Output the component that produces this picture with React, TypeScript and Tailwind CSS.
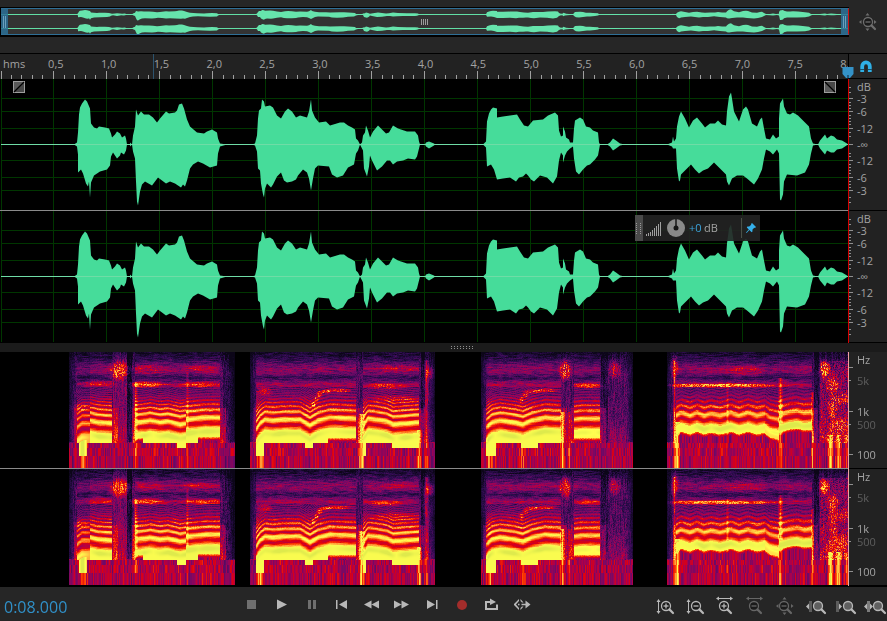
import React, { useEffect, useRef } from "react";

type Pair = [number, number];

const SPAN = 848;
const OCTAVE = 13.2;

// envelope points: x, distance from the centre line
const TOP =
  "0,0 74,0 77,2 78,12 79,30 80,37 82,41 85,45 87,43 90,36 91,21 94,17 97,16 99,18 105,17 109,16 111,11 112,7 115,10 117,13 120,11 122,7 125,9 126,6 127,0 130,0 130,2 132,0 133,9 135,18 136,35 138,29 141,33 144,30 149,30 153,27 157,22 160,26 166,33 169,31 175,32 177,34 179,40 182,41 184,36 187,25 190,18 197,12 204,11 207,13 212,15 217,12 218,6 220,1 227,0 252,0 255,1 257,9 258,26 259,34 261,36 262,45 264,43 265,38 270,39 273,37 277,29 281,26 285,33 288,36 292,33 296,27 300,29 307,27 309,33 311,45 312,34 315,27 319,22 326,23 330,19 340,22 344,22 348,19 352,17 355,15 356,6 358,4 360,0 362,2 363,9 365,12 366,19 368,14 370,7 373,13 378,19 382,15 386,11 389,12 393,19 398,16 407,13 415,13 418,9 419,3 420,0 425,0 426,2 429,3 434,1 435,0 483,0 486,3 487,23 489,31 491,35 493,37 497,36 497,27 503,28 510,29 517,30 520,25 524,19 528,18 533,24 543,25 548,29 555,32 558,29 559,14 561,8 563,9 563,18 565,13 566,7 569,5 570,2 573,2 574,16 575,24 580,27 583,25 586,18 590,17 593,14 598,12 599,2 600,0 607,0 610,2 613,6 616,4 620,1 625,0 667,0 672,2 673,8 674,3 676,6 677,18 679,28 681,33 685,26 689,17 693,24 697,27 702,21 705,17 710,21 715,21 718,24 722,20 726,19 727,33 729,48 731,52 732,46 734,33 739,23 743,35 746,38 748,35 752,21 757,18 760,25 762,27 764,16 766,6 770,5 773,10 776,6 779,8 779,26 780,41 783,46 784,38 787,31 790,30 793,32 798,29 805,22 809,18 811,6 813,1 818,0 820,4 825,10 827,6 831,9 834,8 837,5 842,4 847,1 848,0";
const BOTTOM =
  "0,0 74,0 77,2 78,10 78,28 81,25 83,29 86,39 88,42 89,37 90,53 91,38 94,31 100,27 107,25 110,21 111,12 113,8 117,14 120,11 121,8 124,10 126,6 127,0 130,0 130,2 132,0 133,7 135,14 136,37 137,57 138,61 140,47 142,40 145,37 152,41 155,37 158,33 162,36 166,39 170,37 175,39 181,43 183,40 185,42 187,36 190,24 193,20 198,17 203,19 210,23 217,21 218,9 220,2 227,0 252,0 255,1 257,7 258,24 260,26 261,39 263,50 264,53 265,44 267,39 271,43 273,40 277,32 281,28 284,36 287,38 292,37 296,35 298,31 303,25 307,28 309,34 311,46 313,34 315,24 318,21 329,22 332,30 337,33 343,31 348,23 354,20 356,9 358,6 360,0 363,6 364,24 367,32 369,22 370,11 372,16 377,26 382,22 387,16 390,16 393,20 397,17 403,16 408,14 415,15 417,12 419,4 420,0 425,0 426,2 429,4 434,1 435,0 483,0 486,3 487,22 491,20 494,25 497,35 503,34 510,33 516,37 519,33 523,32 526,29 528,31 531,35 534,37 540,31 547,33 553,39 557,32 559,16 561,8 563,11 563,18 565,11 567,7 570,4 573,2 574,14 576,27 579,30 583,25 587,21 590,20 595,15 598,11 600,0 607,0 610,2 613,6 616,4 620,1 625,0 667,0 672,2 673,4 676,4 677,24 679,37 680,36 681,30 685,26 691,20 695,25 699,29 703,26 708,24 714,18 720,24 726,30 727,37 729,41 732,34 737,31 743,31 747,34 754,40 758,34 762,25 764,14 766,5 770,7 773,10 777,5 779,9 780,55 781,56 783,50 784,37 787,30 797,31 805,28 809,20 811,9 813,1 818,0 820,4 825,10 827,6 831,8 834,8 837,5 842,4 848,0";

const parse = (s: string): Pair[] => s.split(" ").map((p) => p.split(",").map(Number) as Pair);

function outline(centre: number, scale: number) {
  const up = parse(TOP).map(([x, v]) => `${x},${centre - v * scale}`);
  const down = parse(BOTTOM).map(([x, v]) => `${x},${centre + v * scale}`);
  return [...up, ...down.reverse()].join(" ");
}

const MAIN_WAVE = outline(65.5, 1);
const HALVES = Array.from({ length: 16 }, (_, i) => i);

/* ---------- spectrogram ---------- */

const REGIONS: Pair[] = [[69, 235], [250, 435], [481, 633], [667, 848]];

type Voice = {
  x0: number;
  x1: number;
  pitch: Pair[];
  floor: Pair[];
  gain: number;
  depth?: number; // lower edge follows the pitch at this distance
};

const VOICES: Voice[] = [
  { x0: 77, x1: 90, pitch: [[77, 88], [82, 84], [90, 84]], floor: [[77, 91], [79, 104], [86, 104], [87, 91]], gain: 0.86 },
  { x0: 90, x1: 112, pitch: [[90, 81], [98, 83], [112, 84]], floor: [[90, 91]], gain: 1 },
  { x0: 135, x1: 186, pitch: [[135, 83], [146, 82], [150, 81], [160, 83], [168, 82], [180, 85], [186, 84]], floor: [[135, 86], [143, 91], [177, 96]], gain: 1 },
  { x0: 186, x1: 220, pitch: [[186, 80], [196, 79], [206, 78], [220, 78]], floor: [[186, 91], [198, 85]], gain: 1.02 },
  { x0: 256, x1: 356, pitch: [[256, 90], [260, 84], [265, 80], [273, 81], [283, 80], [300, 80], [305, 83], [310, 86], [318, 81], [330, 78], [356, 79]], floor: [[256, 104], [264, 91], [305, 96], [313, 91], [328, 86]], gain: 1 },
  { x0: 363, x1: 419, pitch: [[363, 86], [368, 79], [376, 80], [387, 82], [393, 85], [419, 83]], floor: [[363, 104], [366, 91], [392, 96]], gain: 1 },
  { x0: 486, x1: 561, pitch: [[486, 88], [492, 83], [500, 81], [515, 83], [523, 85], [532, 81], [545, 78], [561, 79]], floor: [[486, 104], [496, 91], [521, 96], [538, 91]], gain: 1 },
  { x0: 574, x1: 600, pitch: [[574, 80], [582, 79], [600, 79]], floor: [[574, 86]], gain: 0.97 },
  { x0: 676, x1: 765, pitch: [[676, 76], [681, 73], [690, 76], [697, 73], [704, 76], [711, 74], [720, 76], [731, 73], [739, 76], [748, 73], [757, 76], [765, 74]], floor: [[676, 83]], gain: 1, depth: 6 },
  { x0: 765, x1: 779, pitch: [[765, 74], [770, 78], [779, 80]], floor: [[765, 84]], gain: 0.92, depth: 7 },
  { x0: 779, x1: 812, pitch: [[779, 75], [790, 72], [797, 71], [804, 73], [812, 72]], floor: [[779, 80]], gain: 1.02, depth: 5 },
];

// x, y, width, height, strength
const PATCHES = [
  [119, 18, 9, 9, 0.42], [81, 55, 8, 4, 0.16], [98, 31, 16, 3, 0.2], [146, 32, 18, 3, 0.3], [203, 32, 20, 3, 0.24],
  [200, 16, 18, 3, 0.18], [146, 17, 18, 5, 0.12], [264, 39, 8, 4, 0.24], [338, 38, 12, 2, 0.36], [325, 39, 6, 2, 0.34],
  [319, 42, 3, 3, 0.36], [316, 47, 2, 3, 0.34], [313, 52, 2, 3, 0.3], [385, 34, 18, 3, 0.24], [395, 47, 24, 4, 0.18],
  [398, 16, 22, 4, 0.14], [430, 20, 5, 6, 0.36], [545, 38, 10, 2, 0.34], [532, 39, 7, 2, 0.32], [525, 42, 3, 3, 0.32],
  [521, 47, 2, 3, 0.3], [565, 18, 6, 10, 0.46], [614, 17, 6, 9, 0.3], [587, 33, 14, 3, 0.24], [674, 14, 4, 12, 0.28],
  [720, 33, 58, 2, 0.4], [745, 18, 20, 5, 0.14], [824, 17, 5, 8, 0.42], [832, 33, 6, 9, 0.28], [832, 54, 5, 12, 0.24],
  [842, 46, 9, 6, 0.22], [838, 74, 12, 8, 0.2],
];

// bright vertical streaks: x, width, first row, strength
const STREAKS = [
  [82, 4, 88, 0.3], [135, 2, 30, 0.26], [187, 1, 20, 0.16], [260, 4, 88, 0.3], [361, 3, 62, 0.5], [419, 2, 78, 0.4],
  [426, 2, 8, 0.26], [489, 4, 88, 0.3], [523, 4, 90, 0.16], [562, 2, 60, 0.4], [569, 2, 60, 0.26], [674, 1, 8, 0.3],
  [677, 2, 70, 0.44], [727, 1, 30, 0.14], [780, 2, 26, 0.3], [812, 1, 40, 0.26], [830, 3, 83, 0.48], [838, 3, 83, 0.4],
  [846, 2, 83, 0.3],
];

const STOPS: [number, number, number, number][] = [
  [0, 0, 0, 0], [0.1, 17, 8, 34], [0.25, 50, 12, 84], [0.4, 112, 10, 104], [0.53, 170, 0, 78], [0.65, 222, 0, 16],
  [0.75, 255, 66, 0], [0.85, 255, 152, 54], [0.94, 255, 224, 72], [1, 255, 255, 80], [1.12, 222, 234, 76],
];

function colour(v: number) {
  for (let i = 1; i < STOPS.length; i++) {
    if (v <= STOPS[i][0]) {
      const a = STOPS[i - 1];
      const b = STOPS[i];
      const t = Math.max(0, (v - a[0]) / (b[0] - a[0]));
      return [a[1] + (b[1] - a[1]) * t, a[2] + (b[2] - a[2]) * t, a[3] + (b[3] - a[3]) * t];
    }
  }
  return STOPS[STOPS.length - 1].slice(1);
}

function hash(x: number, y: number) {
  const n = Math.sin(x * 127.1 + y * 311.7) * 43758.5453;
  return n - Math.floor(n);
}

function smooth(x: number, y: number) {
  const i = Math.floor(x);
  const t = x - i;
  return hash(i, y) * (1 - t) + hash(i + 1, y) * t;
}

function lerp(points: Pair[], x: number) {
  if (x <= points[0][0]) return points[0][1];
  for (let i = 1; i < points.length; i++) {
    if (x <= points[i][0]) {
      const [ax, ay] = points[i - 1];
      const [bx, by] = points[i];
      return ay + ((by - ay) * (x - ax)) / (bx - ax);
    }
  }
  return points[points.length - 1][1];
}

const LEVEL: Pair[] = [[0, 0.14], [5, 0.2], [10, 0.32], [16, 0.47], [20, 0.44], [25, 0.26], [28, 0.36], [32, 0.54], [36, 0.44], [42, 0.48], [50, 0.68], [56, 0.84], [62, 0.93], [70, 0.99], [80, 1.02], [116, 1.02]];
const QUIET: Pair[] = [[0, 0.12], [8, 0.24], [20, 0.32], [45, 0.31], [70, 0.38], [90, 0.46], [116, 0.5]];

function intensity(x: number, y: number, seed: number) {
  const region = REGIONS.find(([a, b]) => x >= a && x < b);
  if (!region) return 0;
  const grain = hash(x + seed, y) - 0.5;
  const streaky = smooth(x / 5 + seed, y) - 0.5;
  const voice = VOICES.find((s) => x >= s.x0 && x < s.x1);
  const row = y >= 104 ? 3 : y >= 96 ? 2 : y >= 91 ? 1 : 0;
  const column = hash(x + seed, row + 3) * 0.7 + smooth(x / 3, 9) * 0.3;
  let v: number;

  if (voice) {
    const base = lerp(voice.pitch, x + 0.5);
    let floor = 91;
    voice.floor.forEach(([fx, fy]) => {
      if (x >= fx) floor = fy;
    });
    if (voice.depth) floor = base + voice.depth;
    const ratio = Math.pow(2, (base - y) / OCTAVE);
    const level = lerp(LEVEL, y) * voice.gain;
    if (y >= floor) {
      v = 0.36 + column * 0.36;
      if (floor < 91 && y < 91) v = Math.max(v - 0.04, 0.84 - (y - floor) * 0.12 + grain * 0.1);
    } else if (ratio < 1.14) {
      v = 1.02 + 0.08 * Math.exp(-Math.pow((y - base - 1) / 2.5, 2)) * smooth(x / 9, 2) * 2;
      v *= voice.gain;
    } else {
      const wave = Math.pow(0.5 + 0.5 * Math.cos(2 * Math.PI * ratio), 0.9);
      const depth = y > 45 ? 0.4 : y > 34 ? 0.34 : 0.08;
      v = level * (1 - depth + depth * wave) + streaky * (y < 36 ? 0.2 : 0.1) + grain * (y < 60 ? 0.1 : 0.03);
    }
  } else {
    v = lerp(QUIET, y) + grain * 0.18 + (smooth(y / 7, x + seed) - 0.5) * 0.18;
    const near = VOICES.some((s) => x > s.x0 - 4 && x < s.x1 + 6);
    if (near && y > 55) v += 0.16;
    if (x > 112 && x < 127) v += 0.1;
    if (x > 126 && x < 132 && y < 90) v -= 0.17;
    if (x > 222 && x < 235) v -= 0.04 + (x - 222) * 0.01;
    if (x > 420 && x < 425) v -= 0.14;
    if (x > 600 && x < 608) v -= 0.12;
    if (x > 813 && x < 819) v -= 0.14;
    if (x > 819 && y > 8) v += 0.12 + grain * 0.16;
    if (y >= 91) v = 0.3 + column * 0.38;
  }

  PATCHES.forEach(([px, py, w, h, s]) => {
    const d = Math.pow((x - px) / w, 2) + Math.pow((y - py) / h, 2);
    if (d < 2) v += s * Math.exp(-d * d) * (0.5 + 0.6 * hash(x, y + seed));
  });
  STREAKS.forEach(([sx, w, top, s]) => {
    const d = Math.abs(x - sx);
    if (d <= w && y >= top && v < 0.9) v += s * (1 - d / (w + 1));
  });

  const edge = Math.min(x - region[0], region[1] === SPAN ? 99 : region[1] - 1 - x);
  if (edge < 7 && y < 90) v *= 0.45 + edge * 0.08;
  return Math.min(1.12, Math.max(0.07, v));
}

function Spectrogram({ seed }: { seed: number }) {
  const ref = useRef<HTMLCanvasElement>(null);

  useEffect(() => {
    const ctx = ref.current?.getContext("2d");
    if (!ctx) return;
    const image = ctx.createImageData(SPAN, 116);
    for (let y = 0; y < 116; y++) {
      for (let x = 0; x < SPAN; x++) {
        const [r, g, b] = colour(intensity(x, y, seed));
        image.data.set([r, g, b, 255], (y * SPAN + x) * 4);
      }
    }
    ctx.putImageData(image, 0, 0);
  }, [seed]);

  return <canvas ref={ref} width={SPAN} height={116} className="block h-[116px] w-full" />;
}

/* ---------- waveform ---------- */

function Waveform() {
  return (
    <svg viewBox="0 0 848 131" preserveAspectRatio="none" className="block h-[131px] w-full">
      <g stroke="#003600" shapeRendering="crispEdges">
        {HALVES.map((i) => (
          <line key={i} x1={i ? i * 53 + 0.5 : 1.5} x2={i ? i * 53 + 0.5 : 1.5} y1="0" y2="131" />
        ))}
        {[19.5, 32.5, 49.5, 81.5, 98.5, 111.5].map((y) => (
          <line key={y} x1="1" x2="848" y1={y} y2={y} />
        ))}
      </g>
      <polygon points={MAIN_WAVE} fill="#46dc9a" />
      <line x1="1" x2="848" y1="65.5" y2="65.5" stroke="#6fdca6" shapeRendering="crispEdges" />
    </svg>
  );
}

function DbScale() {
  const labels = ["dB", "-3", "-6", "-12", "-∞", "-12", "-6", "-3"];
  const minor = [8, 13, 23, 26, 29, 36, 39, 42, 45, 53, 57, 74, 77, 85, 88, 91, 94, 102, 105, 108, 118, 123];
  return (
    <div className="flex h-[132px] w-[38px] shrink-0 border-b border-black bg-[#222222] text-[11px] text-[#a3a3a3]">
      <svg viewBox="0 0 8 131" className="h-[131px] w-2" stroke="#8f8f8f" shapeRendering="crispEdges">
        {minor.map((y) => (
          <line key={y} x1="0" x2="2" y1={y + 0.5} y2={y + 0.5} />
        ))}
        {[19.5, 32.5, 49.5, 65.5, 81.5, 98.5, 111.5].map((y) => (
          <line key={y} x1="0" x2="4" y1={y} y2={y} />
        ))}
      </svg>
      <div className="grid grid-rows-[16px_8px_18px_16px_16px_16px_18px_8px] items-center leading-3">
        {labels.map((label, i) => (
          <span key={i}>{label}</span>
        ))}
      </div>
    </div>
  );
}

function HzScale() {
  return (
    <div className="flex h-[117px] w-[38px] shrink-0 border-b border-black bg-[#222222] text-[11px] text-[#a3a3a3]">
      <svg viewBox="0 0 8 116" className="h-[116px] w-2" stroke="#8f8f8f" shapeRendering="crispEdges">
        {[15.5, 59.5, 102.5].map((y) => (
          <line key={y} x1="0" x2="4" y1={y} y2={y} />
        ))}
        {[28.5, 72.5].map((y) => (
          <line key={y} x1="0" x2="2" y1={y} y2={y} />
        ))}
      </svg>
      <div className="grid grid-rows-[16px_26px_12px_12px_14px_15px_16px] items-center leading-3">
        <span>Hz</span>
        <span className="text-[#5e5e5e]">5k</span>
        <span className="row-start-4">1k</span>
        <span className="row-start-5 text-[#5e5e5e]">500</span>
        <span className="row-start-7">100</span>
      </div>
    </div>
  );
}

function Hud() {
  return (
    <div className="absolute right-22 top-1 flex h-[26px] w-[125px] items-center bg-[#232323]/90 text-[11px]">
      <div className="grid h-full w-2 grid-cols-2 content-center justify-center gap-px bg-[#4a4a4a] px-px">
        {Array.from({ length: 12 }, (_, i) => (
          <i key={i} className="h-px w-px bg-[#999999]" />
        ))}
      </div>
      <svg width="16" height="15" className="ml-[3px]" stroke="#a0a0a0" shapeRendering="crispEdges">
        {[2, 3, 4, 6, 8, 10, 12, 14].map((h, i) => (
          <line key={i} x1={i * 2 + 0.5} x2={i * 2 + 0.5} y1={15 - h} y2="15" />
        ))}
      </svg>
      <button aria-label="Adjust amplitude" className="ml-1">
        <svg width="20" height="20" viewBox="0 0 20 20" className="block">
          <circle cx="10" cy="10" r="9" fill="#8a8a8a" />
          <circle cx="10" cy="10" r="2.5" fill="#141414" />
          <path d="M10 1v9" stroke="#141414" strokeWidth="1.5" />
        </svg>
      </button>
      <input id="gain" defaultValue="+0" className="ml-[3px] w-[14px] bg-transparent text-[#3ba3dc] outline-none" />
      <label htmlFor="gain" className="ml-px text-[#a3a3a3]">
        dB
      </label>
      <button aria-label="Pin" className="ml-auto flex h-5 w-[19px] items-center justify-center border-l border-[#4a5048]">
        <svg width="10" height="10" viewBox="0 0 10 10" fill="#35b0ea">
          <path d="M6 0 10 4 9 5 8.2 4.8 6.4 6.8 6.5 8.6 5.6 9.2 3.4 7 0.6 10 0 9.4 2.8 6.4 0.8 4.4 1.4 3.5 3.2 3.600 5.200 1.800 5 1z" />
        </svg>
      </button>
    </div>
  );
}

/* ---------- icons ---------- */

function Lens({ x = 0, sign }: { x?: number; sign?: "plus" | "minus" }) {
  return (
    <g transform={`translate(${x} 0)`}>
      <circle cx="12" cy="9" r="4.5" fill={sign ? "#1b1b1b" : "#5f5f5f"} stroke="currentColor" strokeWidth="1.3" />
      <path d="M15.4 12.4 19 16" stroke="currentColor" strokeWidth="2.2" strokeLinecap="round" />
      {sign && <path d="M9.5 9h5" stroke="currentColor" strokeWidth="1.3" />}
      {sign === "plus" && <path d="M12 6.5v5" stroke="currentColor" strokeWidth="1.3" />}
    </g>
  );
}

const Vertical = () => (
  <g fill="currentColor">
    <path d="M3.5 3v13" stroke="currentColor" />
    <path d="M1.5 5 3.5 2l2 3zM1.5 14l2 3 2-3z" />
  </g>
);

const Horizontal = () => (
  <g fill="currentColor">
    <path d="M2 1.5h15" stroke="currentColor" />
    <path d="M4-.5 1 1.5l3 2zM15-.5l3 2-3 2z" />
  </g>
);

const Around = () => (
  <g fill="currentColor">
    <path d="M9.500 0l2 2.500h-4zM9.500 18l2-2.500h-4zM1 9l2.500-2v4zM18.500 9 16 7v4z" />
  </g>
);

const ZOOMS = [
  { name: "Zoom in amplitude", dim: false, art: <><Vertical /><Lens x={-1} sign="plus" /></> },
  { name: "Zoom out amplitude", dim: false, art: <><Vertical /><Lens x={-1} sign="minus" /></> },
  { name: "Zoom in time", dim: false, art: <><Horizontal /><Lens x={-3} sign="plus" /></> },
  { name: "Zoom out time", dim: true, art: <><Horizontal /><Lens x={-3} sign="minus" /></> },
  { name: "Zoom out full", dim: true, art: <><Around /><Lens x={-3} sign="minus" /></> },
  { name: "Zoom to in point", dim: false, art: <><path d="M4 4h3v11H4z" fill="#5c5c5c" /><path d="M4 6.5v6l-3-3z" fill="currentColor" /><Lens x={1} /></> },
  { name: "Zoom to out point", dim: false, art: <><path d="M1 4h3v11H1z" fill="#5c5c5c" /><path d="M4 6.5v6l3-3z" fill="currentColor" /><Lens x={1} /></> },
  { name: "Zoom to selection", dim: false, art: <><path d="M2 4h3v11H2z" fill="#7c7c7c" /><path d="M2 6.5v6l-3-3zM5 6.5v6l3-3z" fill="currentColor" /><Lens x={1} /></> },
];

const TRANSPORT = [
  { name: "Stop", art: <path d="M5 5h9v9H5z" fill="#6f6f6f" /> },
  { name: "Play", art: <path d="M5 4.5v10l10-5z" /> },
  { name: "Pause", art: <path d="M6 5h3v9H6zM11 5h3v9h-3z" fill="#6f6f6f" /> },
  { name: "Move to previous", art: <path d="M4 5h1.5v9H4zM15 5v9L7 9.5z" /> },
  { name: "Rewind", art: <path d="M9.5 5.5v8L2 9.5zM17 5.5v8l-7.5-4z" /> },
  { name: "Fast forward", art: <path d="M2 5.5v8l7.500-4zM9.500 5.500v8l7.500-4z" /> },
  { name: "Move to next", art: <path d="M5 5v9l8-4.500zM14 5h1.500v9H14z" /> },
  { name: "Record", art: <circle cx="10" cy="10" r="5" fill="#a32d2b" /> },
  { name: "Loop playback", art: <path d="M3 6h5V3.500L14 7l-6 3V8H5v5h9V9.500h2V15H3z" /> },
  { name: "Skip selection", art: <path d="M7 4v2L4 9.500 7 13v2l-5-5V9zM8.500 4l3 3.500H10L8.500 6zM8.500 15l3-3.500H10L8.500 13zM6 8.700h1.500v1.600H6zM9.500 8.700h4V5.500l5 4-5 4v-3.200h-4z" /> },
];

function Overview() {
  return (
    <div className="flex-1 bg-black pb-[2px] pl-px pt-px">
      <div className="relative flex h-[27px] items-stretch border-y border-r border-y-[#2f6f96] border-r-[#d01010] bg-[#333333]">
        <svg viewBox="1 0 847 25" preserveAspectRatio="none" className="absolute inset-0 h-full w-full">
          {[5.5, 19.5].map((y) => (
            <g key={y}>
              <line x1="0" x2="848" y1={y} y2={y} stroke="#62dfa6" />
              <polygon points={outline(y, 0.1)} fill="#66e4ac" />
            </g>
          ))}
        </svg>
        <button aria-label="Range start" className="relative flex w-[7px] items-center justify-center gap-px bg-[#2b7096]/85">
          <i className="h-3 w-px bg-[#6aa0be]" />
          <i className="h-3 w-px bg-[#6aa0be]" />
        </button>
        <button aria-label="Move range" className="relative flex flex-1 items-center justify-center gap-px">
          {[0, 1, 2, 3].map((i) => (
            <i key={i} className="h-[6px] w-px bg-[#9c9c9c]" />
          ))}
        </button>
        <button aria-label="Range end" className="relative flex w-[7px] items-center justify-center gap-px bg-[#2b7096]/85">
          <i className="h-3 w-px bg-[#6aa0be]" />
          <i className="h-3 w-px bg-[#6aa0be]" />
        </button>
      </div>
    </div>
  );
}

function Ruler() {
  return (
    <div className="relative min-w-0 flex-1 bg-[#222222]">
      <div className="flex h-[17px] pt-1 text-[11px] leading-3 text-[#a3a3a3]">
        <span className="w-0 flex-1 whitespace-nowrap pl-[3px]">hms</span>
        {HALVES.slice(1).map((i) => (
          <span key={i} className="w-0 flex-[2] text-center">
            {(i / 2).toFixed(1).replace(".", ",")}
          </span>
        ))}
        <span className="w-0 flex-1 overflow-hidden">
          <span className="block w-[200%] text-center">8,0</span>
        </span>
      </div>
      <svg viewBox="0 0 848 8" preserveAspectRatio="none" className="block h-2 w-full" stroke="#a0a0a0" shapeRendering="crispEdges">
        {Array.from({ length: 80 }, (_, i) => {
          const x = Math.max(1, Math.round(i * 10.6)) + 0.5;
          return <line key={i} x1={x} x2={x} y1={i % 5 ? 4 : 0} y2="8" />;
        })}
      </svg>
      {/* hover position */}
      <div className="absolute inset-y-0 left-[18%] w-px bg-[#2c536d]" />
      <svg width="12" height="13" viewBox="0 0 12 13" className="absolute -right-[6px] bottom-0 z-10">
        <path d="M.5 1h11v7L8 12H4L.5 8z" fill="#3492c8" />
        <path d="M6 9v4" stroke="#112233" />
      </svg>
    </div>
  );
}

function FadeButton({ side }: { side: "in" | "out" }) {
  return (
    <button
      aria-label={side === "in" ? "Fade in" : "Fade out"}
      className={side === "in" ? "absolute left-[13px] top-[2px]" : "absolute right-3 top-[2px]"}
    >
      <svg width="12" height="12" viewBox="0 0 12 12" className="block">
        <rect x=".5" y=".5" width="11" height="11" fill="#5a5a5a" stroke="#9d9d9d" />
        <path d={side === "in" ? "M1 11 11 1v10z" : "M1 1l10 10V1z"} fill="#484848" />
        <path d={side === "in" ? "M1 11 11 1" : "M1 1 11 11"} stroke="#000" strokeWidth="1.3" />
      </svg>
    </button>
  );
}

export default function App() {
  return (
    <div className="flex min-h-screen flex-col overflow-hidden bg-[#262626] font-['Open_Sans','Noto_Sans',sans-serif]">
      {/* Overview */}
      <div className="flex pt-[7px]">
        <Overview />
        <button aria-label="Zoom out full" className="flex w-[38px] items-center justify-center text-[#6e6e6e]">
          <svg width="20" height="18" viewBox="0 0 20 18" fill="none">
            <Around />
            <Lens x={-2} sign="minus" />
          </svg>
        </button>
      </div>

      {/* Timeline */}
      <div className="mt-4 flex h-[26px] border-t border-black">
        <Ruler />
        <button aria-label="Snap" className="flex w-[39px] items-center border-b border-l border-black pl-[10px]">
          <svg width="14" height="14" viewBox="0 0 14 14" fill="none">
            <path d="M3.200 13V7.500A3.800 4.200 0 0 1 10.800 7.500V13" stroke="#2fb0e6" strokeWidth="3.800" />
            <path d="M1 10.500h4M9 10.500h4" stroke="#17506b" />
          </svg>
        </button>
      </div>

      {/* Channels */}
      {["left", "right"].map((channel) => (
        <div key={channel} className="flex">
          <div className="relative min-w-0 flex-1 border-r border-[#d40000] bg-black">
            <Waveform />
            <div className={channel === "left" ? "h-px bg-[#8a8a8a]" : "h-px"} />
            {channel === "left" ? (
              <>
                <FadeButton side="in" />
                <FadeButton side="out" />
              </>
            ) : (
              <Hud />
            )}
          </div>
          <DbScale />
        </div>
      ))}

      <div className="flex h-[9px] items-center justify-center bg-[#1b1b1b]">
        <div className="ml-9 grid grid-cols-8 gap-x-[2px] gap-y-px">
          {Array.from({ length: 16 }, (_, i) => (
            <i key={i} className="h-px w-px bg-[#909090]" />
          ))}
        </div>
      </div>

      {/* Spectrograms */}
      {[0, 40].map((seed) => (
        <div key={seed} className="flex">
          <div className="min-w-0 flex-1 border-r border-[#f0a0a0] bg-black">
            <Spectrogram seed={seed} />
            <div className={seed === 0 ? "h-px bg-[#8a8a8a]" : "h-px"} />
          </div>
          <HzScale />
        </div>
      ))}

      {/* Transport */}
      <div className="flex h-[35px] items-center border-t border-black text-[#b8b8b8]">
        <div className="w-[236px] shrink-0 pl-1 pt-[6px] text-base text-[#3090c8]">0:08.000</div>
        <div className="flex shrink-0">
          {TRANSPORT.map((t) => (
            <button key={t.name} aria-label={t.name} className="flex w-[30px] justify-center">
              <svg width="19" height="19" viewBox="0 0 19 19" fill="currentColor">
                {t.art}
              </svg>
            </button>
          ))}
        </div>
        <div className="-mr-[3px] ml-auto flex shrink-0 pt-1">
          {ZOOMS.map((z) => (
            <button key={z.name} aria-label={z.name} className={z.dim ? "flex w-[30px] justify-center text-[#666666]" : "flex w-[30px] justify-center"}>
              <svg width="20" height="18" viewBox="0 0 20 18" fill="none" className="overflow-visible">
                {z.art}
              </svg>
            </button>
          ))}
        </div>
      </div>
    </div>
  );
}
